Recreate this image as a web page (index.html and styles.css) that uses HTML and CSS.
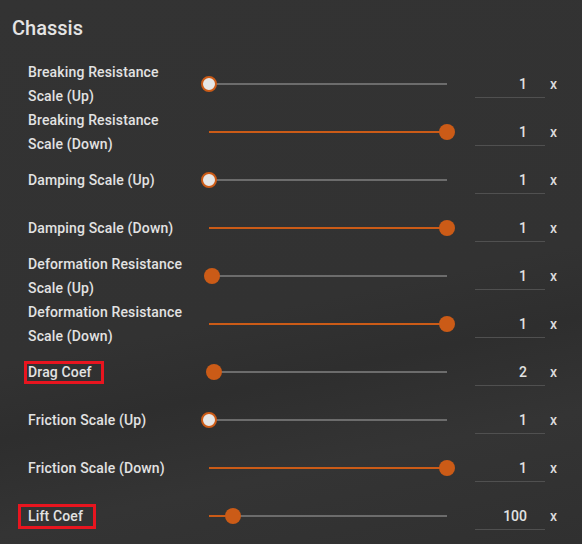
FILE: index.html
```html
<!DOCTYPE html>
<html lang="en">
<head>
  <meta charset="UTF-8" />
  <meta name="viewport" content="width=device-width, initial-scale=1.0" />
  <title>Chassis</title>
  <link rel="stylesheet" href="styles.css">
</head>
<body>
  <div class="panel">
    <h2 class="title">Chassis</h2>

    <div class="rows">
      <div class="row">
        <div class="label">Breaking Resistance Scale (Up)</div>
        <div class="slider"><div class="track"><div class="fill" style="width:0%"></div><span class="thumb min" style="left:0%"></span></div></div>
        <div class="value">1</div>
        <span class="unit">x</span>
      </div>

      <div class="row">
        <div class="label">Breaking Resistance Scale (Down)</div>
        <div class="slider"><div class="track"><div class="fill" style="width:100%"></div><span class="thumb" style="left:100%"></span></div></div>
        <div class="value">1</div>
        <span class="unit">x</span>
      </div>

      <div class="row">
        <div class="label">Damping Scale (Up)</div>
        <div class="slider"><div class="track"><div class="fill" style="width:0%"></div><span class="thumb min" style="left:0%"></span></div></div>
        <div class="value">1</div>
        <span class="unit">x</span>
      </div>

      <div class="row">
        <div class="label">Damping Scale (Down)</div>
        <div class="slider"><div class="track"><div class="fill" style="width:100%"></div><span class="thumb" style="left:100%"></span></div></div>
        <div class="value">1</div>
        <span class="unit">x</span>
      </div>

      <div class="row">
        <div class="label">Deformation Resistance Scale (Up)</div>
        <div class="slider"><div class="track"><div class="fill" style="width:1.2%"></div><span class="thumb" style="left:1.2%"></span></div></div>
        <div class="value">1</div>
        <span class="unit">x</span>
      </div>

      <div class="row">
        <div class="label">Deformation Resistance Scale (Down)</div>
        <div class="slider"><div class="track"><div class="fill" style="width:100%"></div><span class="thumb" style="left:100%"></span></div></div>
        <div class="value">1</div>
        <span class="unit">x</span>
      </div>

      <div class="row">
        <div class="label"><span class="marked drag">Drag Coef</span></div>
        <div class="slider"><div class="track"><div class="fill" style="width:2%"></div><span class="thumb" style="left:2%"></span></div></div>
        <div class="value">2</div>
        <span class="unit">x</span>
      </div>

      <div class="row">
        <div class="label">Friction Scale (Up)</div>
        <div class="slider"><div class="track"><div class="fill" style="width:0%"></div><span class="thumb min" style="left:0%"></span></div></div>
        <div class="value">1</div>
        <span class="unit">x</span>
      </div>

      <div class="row">
        <div class="label">Friction Scale (Down)</div>
        <div class="slider"><div class="track"><div class="fill" style="width:100%"></div><span class="thumb" style="left:100%"></span></div></div>
        <div class="value">1</div>
        <span class="unit">x</span>
      </div>

      <div class="row">
        <div class="label"><span class="marked lift">Lift Coef</span></div>
        <div class="slider"><div class="track"><div class="fill" style="width:10%"></div><span class="thumb" style="left:10%"></span></div></div>
        <div class="value">100</div>
        <span class="unit">x</span>
      </div>
    </div>
  </div>
</body>
</html>
```

FILE: styles.css
```css
:root {
  --bg: #323232;
  --text: #e2e2e2;
  --accent: #cb5b17;
  --rail: #6c6c6c;
  --line: #505050;
  --mark: #e8151f;
}

* {
  box-sizing: border-box;
}

body {
  margin: 0;
  height: 544px;
  overflow: hidden;
  font-family: Roboto, 'Noto Sans', sans-serif;
  color: var(--text);
  background: linear-gradient(168deg, #333333 0%, #323232 55%, #2e2e2e 66%, #343434 80%, #303030 100%);
}

.panel {
  padding: 14px 0 0 12px;
}

.title {
  margin: 0;
  font-size: 20px;
  font-weight: 500;
  line-height: 28px;
  color: #e4e4e4;
}

.rows {
  margin-top: 18px;
  padding-left: 16px;
}

.row {
  display: flex;
  align-items: center;
  height: 48px;
}

.label {
  position: relative;
  width: 173px;
  font-size: 14px;
  font-weight: 500;
  letter-spacing: 0.15px;
  line-height: 24px;
  padding-right: 12px;
}

.marked {
  position: relative;
}

.marked::after {
  content: "";
  position: absolute;
  border: 3px solid var(--mark);
}

.drag::after {
  left: -4px;
  right: -12px;
  top: -3px;
  bottom: -4px;
}

.lift::after {
  left: -10px;
  right: -13px;
  top: -4px;
  bottom: -5px;
}

.slider {
  width: 254px;
  padding: 0 8px;
}

.track {
  position: relative;
  height: 2px;
  background: var(--rail);
}

.fill {
  height: 100%;
  background: var(--accent);
}

.thumb {
  position: absolute;
  top: 50%;
  width: 16px;
  height: 16px;
  border-radius: 50%;
  background: var(--accent);
  transform: translate(-50%, -50%);
}

.thumb.min {
  background: #e6e6e6;
  border: 2px solid var(--accent);
}

.value {
  width: 70px;
  margin-left: 20px;
  height: 28px;
  line-height: 28px;
  padding-right: 18px;
  text-align: right;
  font-size: 14px;
  font-weight: 500;
  border-bottom: 1px solid var(--line);
}

.unit {
  margin-left: 5px;
  font-size: 14px;
  font-weight: 500;
  color: #dcdcdc;
}
```
